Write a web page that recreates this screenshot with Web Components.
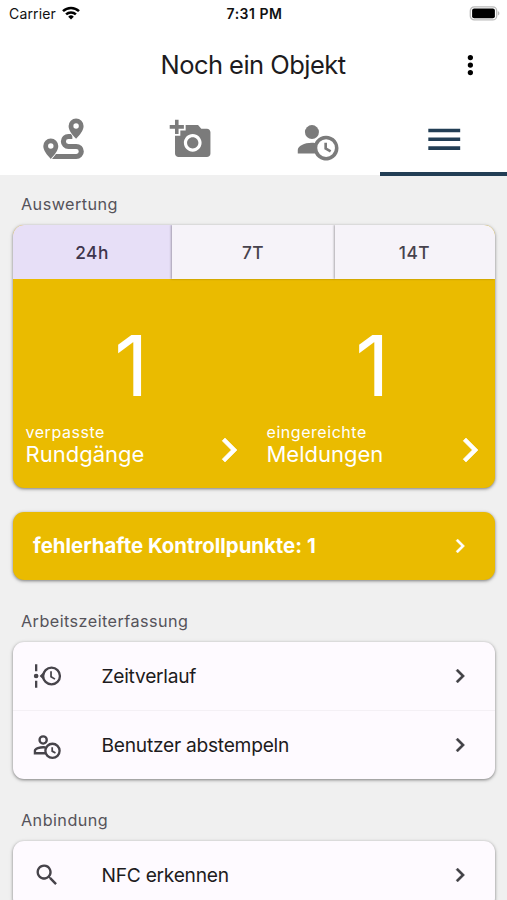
<!DOCTYPE html>
<html lang="de">
<head>
<meta charset="utf-8">
<meta name="viewport" content="width=device-width, initial-scale=1">
<title>Noch ein Objekt</title>
<style>
  body {
    margin: 0;
    height: 900px;
    overflow: hidden;
    background: #f0f0f0;
    font-family: Inter, "Liberation Sans", sans-serif;
    color: #1d1b20;
  }
</style>
</head>
<body>
<object-page></object-page>

<script>
const CLOCK_HANDS = "M16 14h1.5v2.82l2.44 1.41-.75 1.3L16 17.69z";

const ICONS = {
  route: {
    box: "1 0 42 42",
    body: /* html */`
      <path d="M30 18.2H26.1a4.95 4.95 0 0 0 0 9.9H33.9a4.95 4.95 0 0 1 0 9.9H10" fill="none" stroke="currentColor" stroke-width="5"/>
      <g fill="currentColor" stroke="#fff" stroke-width="2" paint-order="stroke">
        <path d="M33.7 .4a7.4 7.4 0 0 1 7.4 7.5c0 4.6-3.6 8.5-7.4 12.7-3.8-4.2-7.4-8.1-7.4-12.7A7.4 7.4 0 0 1 33.7 .4z"/>
        <path d="M8.7 20.2a7.4 7.4 0 0 1 7.4 7.5c0 4.6-3.6 8.5-7.4 12.7-3.8-4.2-7.4-8.1-7.4-12.7a7.4 7.4 0 0 1 7.4-7.5z"/>
      </g>
      <circle cx="33.7" cy="8" r="2.7" fill="#fff"/>
      <circle cx="8.7" cy="27.7" r="2.7" fill="#fff"/>`
  },
  camera: {
    box: "-.4 0 24 24",
    body: `<path d="M3 4V1h2v3h3v2H5v3H3V6H0V4zm3 6V7h3V4h7l1.83 2H21c1.1 0 2 .9 2 2v12c0 1.1-.9 2-2 2H5c-1.1 0-2-.9-2-2V10zm7 9c2.76 0 5-2.24 5-5s-2.24-5-5-5-5 2.24-5 5 2.24 5 5 5zm-3.2-5c0 1.77 1.43 3.2 3.2 3.2s3.2-1.43 3.2-3.2-1.43-3.2-3.2-3.2-3.2 1.43-3.2 3.2z"/>`
  },
  userClock: {
    body: /* html */`
      <path d="M10.63 14.1A7 7 0 1 1 10.67 20H1v-2c.06-1.14.84-2.07 2.34-2.82S6.72 14.04 9 14c.57 0 1.11.05 1.63.1zM17 22a5 5 0 1 0 0-10 5 5 0 0 0 0 10z" fill-rule="evenodd"/>
      <circle cx="9" cy="7.97" r="3.95"/>
      <path d="${CLOCK_HANDS}"/>`
  },
  userClockOutline: {
    box: ".3 0 24 24",
    body: /* html */`
      <g fill="none" stroke="currentColor" stroke-width="2">
        <circle cx="17" cy="17" r="6.1"/>
        <circle cx="9" cy="7.7" r="3.1"/>
        <path d="M11 19.05H1.95V17c0-1.9 4.3-3.1 7.05-3.1.7 0 1.4.07 2.1.2"/>
      </g>
      <path d="${CLOCK_HANDS}"/>`
  },
  timeline: {
    box: ".3 0 24 24",
    body: /* html */`
      <path d="M2 2h2v6H2zM2 16h2v6H2zM9 9v6l-3-3z"/>
      <circle cx="3" cy="12" r="2"/>
      <circle cx="16.2" cy="12" r="7.2" fill="none" stroke="currentColor" stroke-width="2"/>
      <path d="M15 8h1.5v4.25l3.02 1.79-.77 1.28L15 13z"/>`
  },
  menu: { body: `<path d="M3 6h18v2H3zm0 5h18v2H3zm0 5h18v2H3z"/>` },
  dots: {
    body: `<circle cx="12.3" cy="6" r="2.1"/><circle cx="12.3" cy="12" r="2.1"/><circle cx="12.3" cy="18" r="2.1"/>`
  },
  chevron: { body: `<path d="M8.59 16.58 13.17 12 8.59 7.41 10 6l6 6-6 6z" stroke="currentColor" stroke-width=".3"/>` },
  search: {
    body: `<path d="M9.5 3a6.5 6.5 0 0 1 4.94 10.73l.27.27h.79l5 5-1.5 1.5-5-5v-.79l-.27-.27A6.5 6.5 0 1 1 9.5 3m0 2a4.5 4.5 0 1 0 0 9 4.5 4.5 0 0 0 0-9z"/>`
  }
};

class BaseElement extends HTMLElement {
  constructor() {
    super();
    this.attachShadow({ mode: "open" });
  }

  connectedCallback() {
    this.shadowRoot.innerHTML = `<style>${this.constructor.styles}</style>${this.template()}`;
  }
}

class AppIcon extends BaseElement {
  static get styles() {
    return /* css */`
      :host {
        display: block;
        flex: none;
        width: var(--icon-size, 28px);
        height: var(--icon-size, 28px);
      }

      svg {
        display: block;
        width: 100%;
        height: 100%;
        overflow: visible;
        fill: currentColor;
      }
    `;
  }

  template() {
    const icon = ICONS[this.getAttribute("name")];
    return `<svg viewBox="${icon.box || "0 0 24 24"}">${icon.body}</svg>`;
  }
}

class StatusBar extends BaseElement {
  static get styles() {
    return /* css */`
      :host {
        display: grid;
        grid-template-columns: 1fr auto 1fr;
        align-items: center;
        box-sizing: border-box;
        height: 27px;
        padding: 0 7px 0 9px;
        font-size: 14px;
        color: #111;
      }

      .carrier {
        display: flex;
        align-items: center;
        gap: 6px;
        letter-spacing: 0.15px;
      }

      .time {
        font-weight: 600;
        letter-spacing: 0.5px;
      }

      svg {
        display: block;
      }

      .carrier svg {
        margin-top: -2px;
      }

      .battery {
        justify-self: end;
      }
    `;
  }

  template() {
    return /* html */`
      <div class="carrier">
        <span>Carrier</span>
        <svg width="18" height="14" viewBox="0 0 18 14">
          <g fill="none" stroke="#000" stroke-width="2.5">
            <path d="M1 5.2a11.5 11.5 0 0 1 16 0"/>
            <path d="M4.1 8.4a7 7 0 0 1 9.8 0"/>
          </g>
          <path d="M9 13.5 6.2 10.7a4 4 0 0 1 5.6 0z"/>
        </svg>
      </div>
      <div class="time">7:31 PM</div>
      <svg class="battery" width="31" height="15" viewBox="0 0 31 15">
        <rect x="1.3" y=".9" width="26.4" height="13" rx="4" fill="#fff" stroke="#bbb" stroke-width="1.3"/>
        <rect x="3.1" y="2.6" width="22.8" height="9.6" rx="2"/>
        <path d="M28.9 5.3c2 .6 2 3.6 0 4.2z" fill="#bbb"/>
      </svg>`;
  }
}

class PageHeader extends BaseElement {
  static get styles() {
    return /* css */`
      :host {
        --icon-size: 30px;
        display: grid;
        grid-template-columns: 1fr auto 1fr;
        align-items: center;
        box-sizing: border-box;
        height: 76px;
        padding: 0 22px;
      }

      .title {
        grid-column: 2;
        padding: 0 1px 1px 0;
        font-size: 25.5px;
        letter-spacing: -0.54px;
      }

      app-icon {
        justify-self: end;
        margin-top: -1px;
        color: #000;
      }
    `;
  }

  template() {
    return `<div class="title"><slot></slot></div><app-icon name="dots"></app-icon>`;
  }
}

class TabBar extends BaseElement {
  static get styles() {
    return /* css */`
      :host {
        display: grid;
        grid-template-columns: repeat(4, 1fr);
        height: 72px;
      }
    `;
  }

  template() {
    return `<slot></slot>`;
  }
}

class TabItem extends BaseElement {
  static get styles() {
    return /* css */`
      :host {
        --icon-size: 42.5px;
        display: flex;
        align-items: center;
        justify-content: center;
        box-sizing: border-box;
        padding: 4px 0 0 1px;
        border-bottom: 4px solid transparent;
        color: #7b7b7b;
      }

      :host([active]) {
        margin-bottom: -1px;
        border-color: #223e55;
        color: #223e55;
      }
    `;
  }

  template() {
    return `<app-icon name="${this.getAttribute("icon")}"></app-icon>`;
  }
}

class SectionLabel extends BaseElement {
  static get styles() {
    return /* css */`
      :host {
        display: block;
        padding: 0 8px;
        font-size: 16.2px;
        line-height: 20px;
        letter-spacing: 0.45px;
        color: #55535a;
      }
    `;
  }

  template() {
    return `<slot></slot>`;
  }
}

class SurfaceCard extends BaseElement {
  static get styles() {
    return /* css */`
      :host {
        display: block;
        overflow: hidden;
        border-radius: 11px;
        background: #fefaff;
        box-shadow: 0 1px 3px rgba(0, 0, 0, 0.4), 0 1px 5px rgba(0, 0, 0, 0.12);
      }

      :host([warning]) {
        background: #eabb00;
        color: #fff;
      }
    `;
  }

  template() {
    return `<slot></slot>`;
  }
}

class RangeSwitch extends BaseElement {
  static get styles() {
    return /* css */`
      :host {
        display: grid;
        grid-template-columns: 159px 163px 160px;
        height: 54px;
        font-size: 17.3px;
        font-weight: 500;
        letter-spacing: 0.5px;
        color: #47424d;
      }

      div {
        display: flex;
        align-items: center;
        justify-content: center;
        box-sizing: border-box;
        padding: 1px 1px 0 0;
        background: #f6f3f9;
      }

      div + div {
        box-shadow: -1px 0 2px rgba(0, 0, 0, 0.3);
      }

      .selected {
        background: #e7dff7;
        color: #3e354c;
      }
    `;
  }

  template() {
    return this.getAttribute("ranges").split(",")
      .map((range, i) => `<div class="${i ? "" : "selected"}">${range}</div>`)
      .join("");
  }
}

class StatTile extends BaseElement {
  static get styles() {
    return /* css */`
      :host {
        --icon-size: 48px;
        display: flex;
        flex-direction: column;
        flex: 1;
        box-sizing: border-box;
        height: 209px;
        padding: 37px 1px 0 12.5px;
      }

      .value {
        padding-right: 16px;
        font-size: 84px;
        line-height: 100px;
        text-align: center;
      }

      .footer {
        display: flex;
        align-items: flex-start;
        justify-content: space-between;
        margin-top: 7px;
      }

      .caption {
        font-size: 16px;
        line-height: 19px;
        letter-spacing: 0.55px;
      }

      .name {
        font-size: 22px;
        line-height: 24px;
      }

      app-icon {
        margin-top: 3px;
      }
    `;
  }

  template() {
    return /* html */`
      <div class="value">${this.getAttribute("value")}</div>
      <div class="footer">
        <div>
          <div class="caption">${this.getAttribute("caption")}</div>
          <div class="name"><slot></slot></div>
        </div>
        <app-icon name="chevron"></app-icon>
      </div>`;
  }
}

class StatGroup extends BaseElement {
  static get styles() {
    return /* css */`
      :host {
        display: flex;
      }
    `;
  }

  template() {
    return `<slot></slot>`;
  }
}

class ListRow extends BaseElement {
  static get styles() {
    return /* css */`
      :host {
        display: flex;
        align-items: center;
        box-sizing: border-box;
        height: 68px;
        padding: 0 21px 0 19.5px;
        font-size: 19.2px;
        letter-spacing: -0.26px;
      }

      :host([divided]) {
        height: 69px;
        border-top: 1px solid #f4f0f5;
      }

      :host([strong]) {
        padding-left: 20px;
        font-size: 20.4px;
        font-weight: 700;
        letter-spacing: 0;
      }

      :host([strong]) .label {
        padding-bottom: 1px;
      }

      .label {
        flex: 1;
      }

      .lead {
        margin-right: 41px;
        color: #47444b;
      }

      .next {
        color: var(--chevron-color, #414045);
      }
    `;
  }

  template() {
    const icon = this.getAttribute("icon");
    return /* html */`
      ${icon ? `<app-icon class="lead" name="${icon}"></app-icon>` : ""}
      <span class="label"><slot></slot></span>
      <app-icon class="next" name="chevron"></app-icon>`;
  }
}

class ObjectPage extends BaseElement {
  static get styles() {
    return /* css */`
      :host {
        display: block;
      }

      header {
        background: #fff;
      }

      main {
        display: flex;
        flex-direction: column;
        padding: 18.5px 12px 0 13px;
      }

      section-label {
        margin-bottom: 11.5px;
      }

      surface-card {
        margin-bottom: 30.5px;
      }

      surface-card.stats {
        margin-bottom: 24px;
      }

      surface-card[warning] {
        --chevron-color: #fff;
      }
    `;
  }

  template() {
    return /* html */`
      <header>
        <status-bar></status-bar>
        <page-header>Noch ein Objekt</page-header>
        <tab-bar>
          <tab-item icon="route"></tab-item>
          <tab-item icon="camera"></tab-item>
          <tab-item icon="userClock"></tab-item>
          <tab-item icon="menu" active></tab-item>
        </tab-bar>
      </header>
      <main>
        <section-label>Auswertung</section-label>
        <surface-card class="stats" warning>
          <range-switch ranges="24h,7T,14T"></range-switch>
          <stat-group>
            <stat-tile value="1" caption="verpasste">Rundgänge</stat-tile>
            <stat-tile value="1" caption="eingereichte">Meldungen</stat-tile>
          </stat-group>
        </surface-card>
        <surface-card warning>
          <list-row strong>fehlerhafte Kontrollpunkte: 1</list-row>
        </surface-card>
        <section-label>Arbeitszeiterfassung</section-label>
        <surface-card>
          <list-row icon="timeline">Zeitverlauf</list-row>
          <list-row icon="userClockOutline" divided>Benutzer abstempeln</list-row>
        </surface-card>
        <section-label>Anbindung</section-label>
        <surface-card>
          <list-row icon="search">NFC erkennen</list-row>
        </surface-card>
      </main>`;
  }
}

customElements.define("app-icon", AppIcon);
customElements.define("status-bar", StatusBar);
customElements.define("page-header", PageHeader);
customElements.define("tab-bar", TabBar);
customElements.define("tab-item", TabItem);
customElements.define("section-label", SectionLabel);
customElements.define("surface-card", SurfaceCard);
customElements.define("range-switch", RangeSwitch);
customElements.define("stat-tile", StatTile);
customElements.define("stat-group", StatGroup);
customElements.define("list-row", ListRow);
customElements.define("object-page", ObjectPage);
</script>
</body>
</html>
